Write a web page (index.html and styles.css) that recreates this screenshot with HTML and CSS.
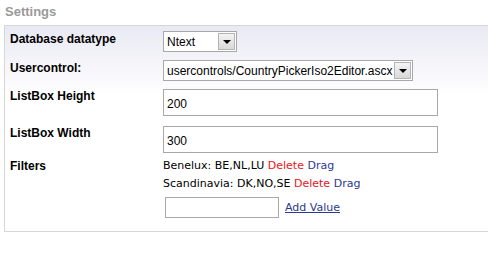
FILE: index.html
```html
<!DOCTYPE html>
<html lang="en">
<head>
    <meta charset="UTF-8">
    <title>Settings</title>
    <link rel="stylesheet" href="styles.css">
</head>
<body>
    <h2 class="title">Settings</h2>
    <div class="panel">
        <div class="row row-combo">
            <div class="label">Database datatype</div>
            <div class="field">
                <div class="combo combo-small">
                    <span class="combo-text">Ntext</span>
                    <span class="combo-btn"></span>
                </div>
            </div>
        </div>
        <div class="row row-combo">
            <div class="label">Usercontrol:</div>
            <div class="field">
                <div class="combo combo-wide">
                    <span class="combo-text">usercontrols/CountryPickerIso2Editor.ascx</span>
                    <span class="combo-btn"></span>
                </div>
            </div>
        </div>
        <div class="row row-input">
            <div class="label">ListBox Height</div>
            <div class="field"><input class="text" type="text" value="200"></div>
        </div>
        <div class="row row-input last">
            <div class="label">ListBox Width</div>
            <div class="field"><input class="text" type="text" value="300"></div>
        </div>
        <div class="row row-filters">
            <div class="label">Filters</div>
            <div class="field">
                <div class="filter">Benelux: BE,NL,LU <a class="delete">Delete</a> <a class="drag">Drag</a></div>
                <div class="filter">Scandinavia: DK,NO,SE <a class="delete">Delete</a> <a class="drag">Drag</a></div>
                <div class="add">
                    <input class="text small" type="text">
                    <a class="add-link" href="#">Add Value</a>
                </div>
            </div>
        </div>
    </div>
</body>
</html>
```

FILE: styles.css
```css
* {
    margin: 0;
    padding: 0;
    box-sizing: border-box;
}

body {
    font-family: "Liberation Sans", Arial, sans-serif;
    font-size: 12px;
    color: #000;
    background: #fff;
    width: 488px;
    overflow: hidden;
}

.title {
    font-size: 13px;
    font-weight: bold;
    color: #9a9a9a;
    padding: 4px 0 0 5px;
    height: 25px;
}

.panel {
    margin-left: 4px;
    width: 500px;
    height: 207px;
    border: 1px solid #d6d6d6;
    border-right: none;
    background: linear-gradient(#e9e9f4, #ffffff 70px);
    padding-top: 5px;
}

.row {
    display: flex;
}

.label {
    width: 158px;
    padding-left: 5px;
    font-weight: bold;
}

.row-combo {
    height: 29px;
}

.row-combo .label {
    padding-top: 1px;
}

.row-input {
    height: 37px;
}

.row-input.last {
    height: 33px;
}

.combo {
    display: flex;
    height: 21px;
    border: 1px solid #a8a8a8;
    background: #fff;
}

.combo-small {
    width: 74px;
}

.combo-wide {
    width: 250px;
}

.combo-text {
    flex: 1;
    padding: 3px 0 0 3px;
    white-space: nowrap;
    overflow: hidden;
}

.combo-btn {
    width: 17px;
    margin: 1px;
    border: 1px solid #b4b4b4;
    background: linear-gradient(#f4f4f4, #d8d8d8);
    display: flex;
    align-items: center;
    justify-content: center;
}

.combo-btn::after {
    content: "";
    border-left: 4px solid transparent;
    border-right: 4px solid transparent;
    border-top: 4px solid #000;
}

.text {
    font: inherit;
    width: 275px;
    height: 27px;
    border: 1px solid #a8a8a8;
    padding: 2px 0 0 3px;
    background: #fff;
    color: #000;
}

.text.small {
    width: 114px;
    height: 21px;
}

.filter,
.add-link {
    font-family: "DejaVu Sans", sans-serif;
    font-size: 11px;
}

.filter {
    height: 18px;
}

.delete {
    color: #e8141c;
}

.drag {
    color: #2b3990;
}

.add {
    display: flex;
    align-items: center;
    gap: 6px;
    padding: 2px 0 0 2px;
}

.add-link {
    color: #2b3990;
    text-decoration: underline;
}
```
